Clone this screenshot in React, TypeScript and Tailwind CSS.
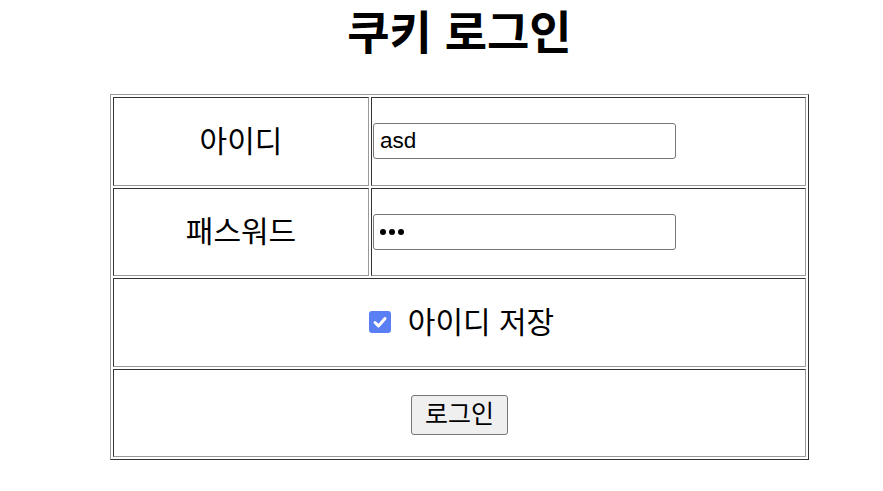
const font = { fontFamily: '"Liberation Sans", "Noto Sans CJK KR", sans-serif' }

const cell = 'border border-t-[#333] border-l-[#333] border-b-[#999] border-r-[#999] p-px h-[88.5px]'

export default function App() {
  return (
    <div className="w-[919px] bg-white text-black text-center" style={font}>
      <h1 className="pt-[7px] h-[94px] text-[46px] font-bold leading-[52px]">쿠키 로그인</h1>
      <table className="mx-auto w-[699px] border-separate border-spacing-[2px] border border-t-[#999] border-l-[#999] border-b-[#333] border-r-[#333] text-[30px]">
        <tbody>
          <tr>
            <td className={`${cell} w-[256px]`}>아이디</td>
            <td className={`${cell} text-left`}>
              <div className="w-[303px] h-[36px] border border-[#767676] rounded-[3px] px-[6px] text-[22.5px] leading-[34px]">
                asd
              </div>
            </td>
          </tr>
          <tr>
            <td className={cell}>패스워드</td>
            <td className={`${cell} text-left`}>
              <div className="w-[303px] h-[36px] border border-[#767676] rounded-[3px] pl-[6px] flex items-center gap-[3px]">
                {[0, 1, 2].map((i) => (
                  <span key={i} className="w-[6px] h-[6px] rounded-full bg-black" />
                ))}
              </div>
            </td>
          </tr>
          <tr>
            <td colSpan={2} className={cell}>
              <div className="flex items-center justify-center gap-[17px] pl-[4px]">
                <span className="w-[22px] h-[22px] rounded-[3px] bg-[#5a7ff5] flex items-center justify-center">
                  <svg width="16" height="16" viewBox="0 0 16 16">
                    <path d="M3 8.5 L6.5 12 L13 4.5" fill="none" stroke="white" strokeWidth="3" strokeLinecap="round" strokeLinejoin="round" />
                  </svg>
                </span>
                <span>아이디 저장</span>
              </div>
            </td>
          </tr>
          <tr>
            <td colSpan={2} className={cell}>
              <button className="w-[97px] h-[40px] bg-[#efefef] border border-[#767676] rounded-[3px] text-[25px] leading-none">
                로그인
              </button>
            </td>
          </tr>
        </tbody>
      </table>
    </div>
  )
}
